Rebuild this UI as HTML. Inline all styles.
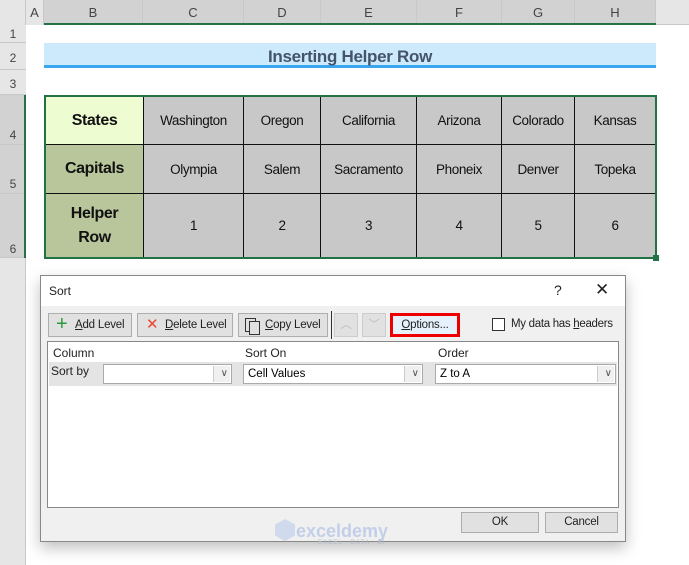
<!DOCTYPE html>
<html><head><style>
body{margin:0;width:689px;height:565px;position:relative;overflow:hidden;background:#fff;font-family:"Liberation Sans",sans-serif;}
.a{position:absolute;box-sizing:border-box;}
.ch{top:0;height:25px;background:#e6e6e6;border-right:1px solid #c8c8c8;font-size:13px;color:#444;text-align:center;line-height:25px;}
.rh{left:0;width:26px;background:#e6e6e6;border-bottom:1px solid #c8c8c8;font-size:12px;color:#444;text-align:center;}
.c{border-right:1.5px solid #111;border-bottom:1.5px solid #111;background:#c8c8c8;font-size:13.5px;letter-spacing:-0.4px;color:#111;display:flex;align-items:center;justify-content:center;text-align:center;}
.btn{top:313px;height:24px;background:#e1e1e1;border:1px solid #adadad;font-size:11.5px;letter-spacing:-0.2px;color:#222;line-height:22px;}
.cb{height:20px;top:364px;border:1px solid #aaa;background:#fff;font-size:11.5px;line-height:18px;padding-left:4px;}
.dd{position:absolute;right:1px;top:1px;width:16px;height:16px;border-left:1px solid #ccc;background:#f0f0f0;}
</style></head><body>
<div class="a" style="left:0;top:0;width:689px;height:25px;background:#e6e6e6;border-bottom:1px solid #c8c8c8"></div>
<div class="a" style="left:0;top:0;width:26px;height:565px;background:#e6e6e6;border-right:1px solid #c8c8c8"></div>
<div class="a ch" style="left:26px;width:18px">A</div>
<div class="a ch" style="left:44px;width:99px;background:#d2d2d2">B</div>
<div class="a ch" style="left:143px;width:101px;background:#d2d2d2">C</div>
<div class="a ch" style="left:244px;width:77px;background:#d2d2d2">D</div>
<div class="a ch" style="left:321px;width:96px;background:#d2d2d2">E</div>
<div class="a ch" style="left:417px;width:85px;background:#d2d2d2">F</div>
<div class="a ch" style="left:502px;width:73px;background:#d2d2d2">G</div>
<div class="a ch" style="left:575px;width:81px;background:#d2d2d2">H</div>
<div class="a" style="left:44px;top:23px;width:612px;height:2px;background:#217346"></div>
<div class="a rh" style="top:25px;height:18px;line-height:18px">1</div>
<div class="a rh" style="top:43px;height:27px;line-height:30px">2</div>
<div class="a rh" style="top:70px;height:25px;line-height:28px">3</div>
<div class="a rh" style="top:95px;height:50px;line-height:80px;background:#d2d2d2">4</div>
<div class="a rh" style="top:145px;height:49px;line-height:78px;background:#d2d2d2">5</div>
<div class="a rh" style="top:194px;height:64px;line-height:110px;background:#d2d2d2">6</div>
<div class="a" style="left:24px;top:95px;width:2px;height:163px;background:#217346"></div>
<div class="a" style="left:44px;top:43px;width:612px;height:25px;background:#cdeafd;text-align:center;font-weight:bold;font-size:17px;letter-spacing:-0.3px;color:#44546a;line-height:27px;border-bottom:3px solid #3aa6ee">Inserting Helper Row</div>

<div class="a" style="left:44px;top:95px;width:613px;height:164px;border:2px solid #217346;background:#111"></div>
<div class="a c" style="left:46px;top:97px;width:98px;height:48px;background:#edfcd1;font-weight:bold;font-size:16px">States</div>
<div class="a c" style="left:144px;top:97px;width:100px;height:48px">Washington</div>
<div class="a c" style="left:244px;top:97px;width:77px;height:48px">Oregon</div>
<div class="a c" style="left:321px;top:97px;width:96px;height:48px">California</div>
<div class="a c" style="left:417px;top:97px;width:85px;height:48px">Arizona</div>
<div class="a c" style="left:502px;top:97px;width:73px;height:48px">Colorado</div>
<div class="a c" style="left:575px;top:97px;width:80px;height:48px;border-right:0">Kansas</div>
<div class="a c" style="left:46px;top:145px;width:98px;height:49px;background:#b9c69c;font-weight:bold;font-size:16px">Capitals</div>
<div class="a c" style="left:144px;top:145px;width:100px;height:49px">Olympia</div>
<div class="a c" style="left:244px;top:145px;width:77px;height:49px">Salem</div>
<div class="a c" style="left:321px;top:145px;width:96px;height:49px">Sacramento</div>
<div class="a c" style="left:417px;top:145px;width:85px;height:49px">Phoneix</div>
<div class="a c" style="left:502px;top:145px;width:73px;height:49px">Denver</div>
<div class="a c" style="left:575px;top:145px;width:80px;height:49px;border-right:0">Topeka</div>
<div class="a c" style="left:46px;top:194px;width:98px;height:63px;background:#b9c69c;font-weight:bold;font-size:16px;border-bottom:0;line-height:24px">Helper<br>Row</div>
<div class="a c" style="left:144px;top:194px;width:100px;height:63px;border-bottom:0">1</div>
<div class="a c" style="left:244px;top:194px;width:77px;height:63px;border-bottom:0">2</div>
<div class="a c" style="left:321px;top:194px;width:96px;height:63px;border-bottom:0">3</div>
<div class="a c" style="left:417px;top:194px;width:85px;height:63px;border-bottom:0">4</div>
<div class="a c" style="left:502px;top:194px;width:73px;height:63px;border-bottom:0">5</div>
<div class="a c" style="left:575px;top:194px;width:80px;height:63px;border:0">6</div>
<div class="a" style="left:653px;top:255px;width:6px;height:6px;background:#217346"></div>

<!-- dialog -->
<div class="a" style="left:40px;top:275px;width:586px;height:267px;background:#f0f0f0;border:1px solid #888;box-shadow:0 6px 14px rgba(0,0,0,.25)">
<div class="a" style="left:0;top:0;width:584px;height:30px;background:#fff"></div>
<div class="a" style="left:8px;top:8px;font-size:12px;color:#222">Sort</div>
<div class="a" style="left:513px;top:6px;font-size:14px;color:#222">?</div>
<div class="a" style="left:554px;top:4px;font-size:17px;color:#222;font-weight:300">✕</div>
</div>
<div class="a btn" style="left:48px;width:84px"><span style="color:#2a9a3a;font-size:20px;position:absolute;left:7px;top:-1px">+</span><span style="position:absolute;left:26px"><u>A</u>dd Level</span></div>
<div class="a btn" style="left:137px;width:96px"><span style="color:#e43;font-size:15px;position:absolute;left:8px;top:0">✕</span><span style="position:absolute;left:27px"><u>D</u>elete Level</span></div>
<div class="a btn" style="left:238px;width:90px"><span style="position:absolute;left:6px;top:4px;width:9px;height:12px;border:1px solid #333"></span><span style="position:absolute;left:10px;top:7px;width:9px;height:12px;border:1px solid #333;background:#e1e1e1"></span><span style="position:absolute;left:26px"><u>C</u>opy Level</span></div>
<div class="a" style="left:331px;top:311px;width:1px;height:28px;background:#333"></div>
<div class="a btn" style="left:334px;width:24px;border-color:#ccc;color:#bbb;text-align:center">︿</div>
<div class="a btn" style="left:362px;width:24px;border-color:#ccc;color:#bbb;text-align:center">﹀</div>
<div class="a btn" style="left:390px;width:70px;border:3px solid #e00;background:#e5f1fb;text-align:center;line-height:19px"><u>O</u>ptions...</div>
<div class="a" style="left:492px;top:318px;width:13px;height:13px;border:1px solid #333;background:#fff"></div>
<div class="a" style="left:511px;top:318px;font-size:11.5px;letter-spacing:-0.3px;color:#222">My data has <u>h</u>eaders</div>
<div class="a" style="left:47px;top:341px;width:572px;height:167px;background:#fff;border:1px solid #888"></div>
<div class="a" style="left:53px;top:346px;font-size:12px;color:#222">Column</div>
<div class="a" style="left:245px;top:346px;font-size:12px;color:#222">Sort On</div>
<div class="a" style="left:438px;top:346px;font-size:12px;color:#222">Order</div>
<div class="a" style="left:49px;top:362px;width:568px;height:24px;background:#e4e4e4"></div>
<div class="a" style="left:51px;top:364px;font-size:12px;color:#222">Sort by</div>
<div class="a cb" style="left:103px;width:129px"><div class="dd"></div><span style="position:absolute;right:3px;top:0;font-size:10px;color:#555">∨</span></div>
<div class="a cb" style="left:243px;width:180px">Cell Values<div class="dd"></div><span style="position:absolute;right:3px;top:0;font-size:10px;color:#555">∨</span></div>
<div class="a cb" style="left:435px;width:181px">Z to A<div class="dd"></div><span style="position:absolute;right:3px;top:0;font-size:10px;color:#555">∨</span></div>
<div class="a btn" style="left:461px;top:512px;width:78px;height:21px;line-height:19px;text-align:center">OK</div>
<div class="a btn" style="left:545px;top:512px;width:73px;height:21px;line-height:19px;text-align:center">Cancel</div>
<div class="a" style="left:296px;top:521px;font-size:18px;font-weight:bold;color:#b8c8e8;opacity:.8">exceldemy</div>
<div class="a" style="left:318px;top:540px;font-size:6px;color:#b0b8c8;letter-spacing:1px">EXCEL · DATA · BI</div>
<div class="a" style="left:275px;top:519px;width:20px;height:22px;background:#c8d4ec;opacity:.8;clip-path:polygon(50% 0,100% 25%,100% 75%,50% 100%,0 75%,0 25%)"></div>
</body></html>
